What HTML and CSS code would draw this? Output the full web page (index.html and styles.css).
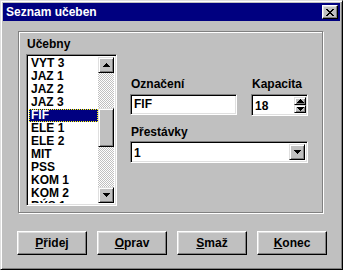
FILE: index.html
```html
<!DOCTYPE html>
<html lang="cs">
<head>
    <meta charset="UTF-8">
    <title>Seznam učeben</title>
    <link rel="stylesheet" href="styles.css">
</head>
<body>
    <div class="window">
        <!-- Titulek okna -->
        <div class="titlebar">
            <span class="title">Seznam učeben</span>
            <span class="close-btn">
                <svg width="8" height="7" viewBox="0 0 8 7" shape-rendering="crispEdges"><path d="M0 0h2v1H0zM6 0h2v1H6zM1 1h2v1H1zM5 1h2v1H5zM2 2h4v1H2zM3 3h2v1H3zM2 4h4v1H2zM1 5h2v1H1zM5 5h2v1H5zM0 6h2v1H0zM6 6h2v1H6z" fill="#000"/></svg>
            </span>
        </div>

        <!-- Skupina s poli -->
        <div class="groupbox">
            <div class="list-col">
                <span class="label">Učebny</span>
                <div class="listbox sunken">
                    <div class="list-items">
                        <div class="item">VYT 3</div>
                        <div class="item">JAZ 1</div>
                        <div class="item">JAZ 2</div>
                        <div class="item">JAZ 3</div>
                        <div class="item selected">FIF</div>
                        <div class="item">ELE 1</div>
                        <div class="item">ELE 2</div>
                        <div class="item">MIT</div>
                        <div class="item">PSS</div>
                        <div class="item">KOM 1</div>
                        <div class="item">KOM 2</div>
                        <div class="item">BÝS 1</div>
                    </div>
                    <div class="scrollbar">
                        <div class="sb-btn raised">
                            <svg width="7" height="4" viewBox="0 0 7 4" shape-rendering="crispEdges"><path d="M3 0h1v1h1v1h1v1h1v1H0V3h1V2h1V1h1z" fill="#000"/></svg>
                        </div>
                        <div class="sb-track">
                            <div class="sb-thumb raised"></div>
                        </div>
                        <div class="sb-btn raised">
                            <svg width="7" height="4" viewBox="0 0 7 4" shape-rendering="crispEdges"><path d="M0 0h7v1H6v1H5v1H4v1H3V3H2V2H1V1H0z" fill="#000"/></svg>
                        </div>
                    </div>
                </div>
            </div>

            <div class="fields">
                <div class="row">
                    <div class="field field-name">
                        <span class="label">Označení</span>
                        <div class="textbox sunken">FIF</div>
                    </div>
                    <div class="field field-cap">
                        <span class="label">Kapacita</span>
                        <div class="spinbox sunken">
                            <span class="spin-value">18</span>
                            <div class="spin-btns">
                                <div class="spin-btn raised">
                                    <svg width="7" height="4" viewBox="0 0 7 4" shape-rendering="crispEdges"><path d="M3 0h1v1h1v1h1v1h1v1H0V3h1V2h1V1h1z" fill="#000"/></svg>
                                </div>
                                <div class="spin-btn raised">
                                    <svg width="7" height="4" viewBox="0 0 7 4" shape-rendering="crispEdges"><path d="M0 0h7v1H6v1H5v1H4v1H3V3H2V2H1V1H0z" fill="#000"/></svg>
                                </div>
                            </div>
                        </div>
                    </div>
                </div>
                <div class="field field-breaks">
                    <span class="label">Přestávky</span>
                    <div class="combo sunken">
                        <span class="combo-value">1</span>
                        <div class="combo-btn raised">
                            <svg width="7" height="4" viewBox="0 0 7 4" shape-rendering="crispEdges"><path d="M0 0h7v1H6v1H5v1H4v1H3V3H2V2H1V1H0z" fill="#000"/></svg>
                        </div>
                    </div>
                </div>
            </div>
        </div>

        <!-- Tlačítka -->
        <div class="buttons">
            <div class="btn"><u>P</u>řidej</div>
            <div class="btn"><u>O</u>prav</div>
            <div class="btn"><u>S</u>maž</div>
            <div class="btn"><u>K</u>onec</div>
        </div>
    </div>
</body>
</html>
```

FILE: styles.css
```css
/* Reset */
* {
  margin: 0;
  padding: 0;
  box-sizing: border-box;
}

body {
  font-family: "Liberation Sans", Arial, sans-serif;
  font-size: 12px;
  font-weight: bold;
  color: #000;
  background: #c0c0c0;
}

/* Okno */
.window {
  width: 343px;
  height: 270px;
  background: #c0c0c0;
  border: 1px solid;
  border-color: #dfdfdf #000 #000 #dfdfdf;
  box-shadow: inset 1px 1px #fff, inset -1px -1px #808080;
  padding: 2px;
}

.titlebar {
  height: 18px;
  background: #000080;
  color: #fff;
  display: flex;
  align-items: center;
  justify-content: space-between;
  padding: 0 2px 0 3px;
}

.title {
  line-height: 18px;
}

.close-btn {
  width: 16px;
  height: 14px;
  display: flex;
  align-items: center;
  justify-content: center;
  background: #c0c0c0;
  border: 1px solid;
  border-color: #fff #000 #000 #fff;
  box-shadow: inset -1px -1px #808080, inset 1px 1px #dfdfdf;
}

/* 3D okraje */
.sunken {
  background: #fff;
  border: 1px solid;
  border-color: #808080 #fff #fff #808080;
  box-shadow: inset 1px 1px #000, inset -1px -1px #dfdfdf;
}

.raised {
  background: #c0c0c0;
  border: 1px solid;
  border-color: #dfdfdf #000 #000 #dfdfdf;
  box-shadow: inset 1px 1px #fff, inset -1px -1px #808080;
  display: flex;
  align-items: center;
  justify-content: center;
}

/* Skupina */
.groupbox {
  margin: 10px 0 0 15px;
  width: 305px;
  height: 182px;
  border: 1px solid #808080;
  box-shadow: inset 1px 1px #fff, 1px 1px #fff;
  display: flex;
  padding: 6px 0 0 7px;
}

.label {
  display: block;
  line-height: 13px;
  padding-left: 1px;
}

.list-col {
  width: 91px;
}

.listbox {
  margin-top: 3px;
  height: 152px;
  display: flex;
  padding: 2px;
}

.list-items {
  flex: 1;
  overflow: hidden;
}

.item {
  height: 13px;
  line-height: 13px;
  padding-left: 2px;
  white-space: nowrap;
}

.item.selected {
  background: #000080;
  color: #fff;
  outline: 1px dotted #ff0;
  outline-offset: -1px;
}

.scrollbar {
  width: 16px;
  display: flex;
  flex-direction: column;
}

.sb-btn {
  height: 16px;
}

.sb-track {
  flex: 1;
  background-color: #fff;
  background-image: repeating-conic-gradient(#c0c0c0 0 25%, #fff 0 50%);
  background-size: 2px 2px;
}

.sb-thumb {
  margin-top: 35px;
  height: 39px;
}

/* Pole vpravo */
.fields {
  margin-left: 13px;
  padding-top: 40px;
}

.row {
  display: flex;
  gap: 14px;
}

.field-name {
  width: 107px;
}

.field-cap {
  width: 57px;
}

.textbox {
  margin-top: 3px;
  height: 21px;
  padding-left: 3px;
  line-height: 19px;
}

.spinbox {
  margin-top: 3px;
  height: 22px;
  display: flex;
  padding: 2px 1px 2px 3px;
}

.spin-value {
  flex: 1;
  line-height: 18px;
}

.spin-btns {
  width: 12px;
  display: flex;
  flex-direction: column;
}

.spin-btn {
  flex: 1;
}

.field-breaks {
  margin-top: 10px;
  width: 178px;
}

.combo {
  margin-top: 2px;
  height: 22px;
  display: flex;
  padding: 2px;
}

.combo-value {
  flex: 1;
  line-height: 18px;
  padding-left: 1px;
}

.combo-btn {
  width: 16px;
}

/* Tlačítka */
.buttons {
  display: flex;
  gap: 10px;
  margin: 18px 0 0 14px;
}

.btn {
  width: 70px;
  height: 24px;
  line-height: 22px;
  text-align: center;
  border: 1px solid;
  border-color: #fff #000 #000 #fff;
  box-shadow: inset -1px -1px #808080, inset 1px 1px #dfdfdf;
}
```
